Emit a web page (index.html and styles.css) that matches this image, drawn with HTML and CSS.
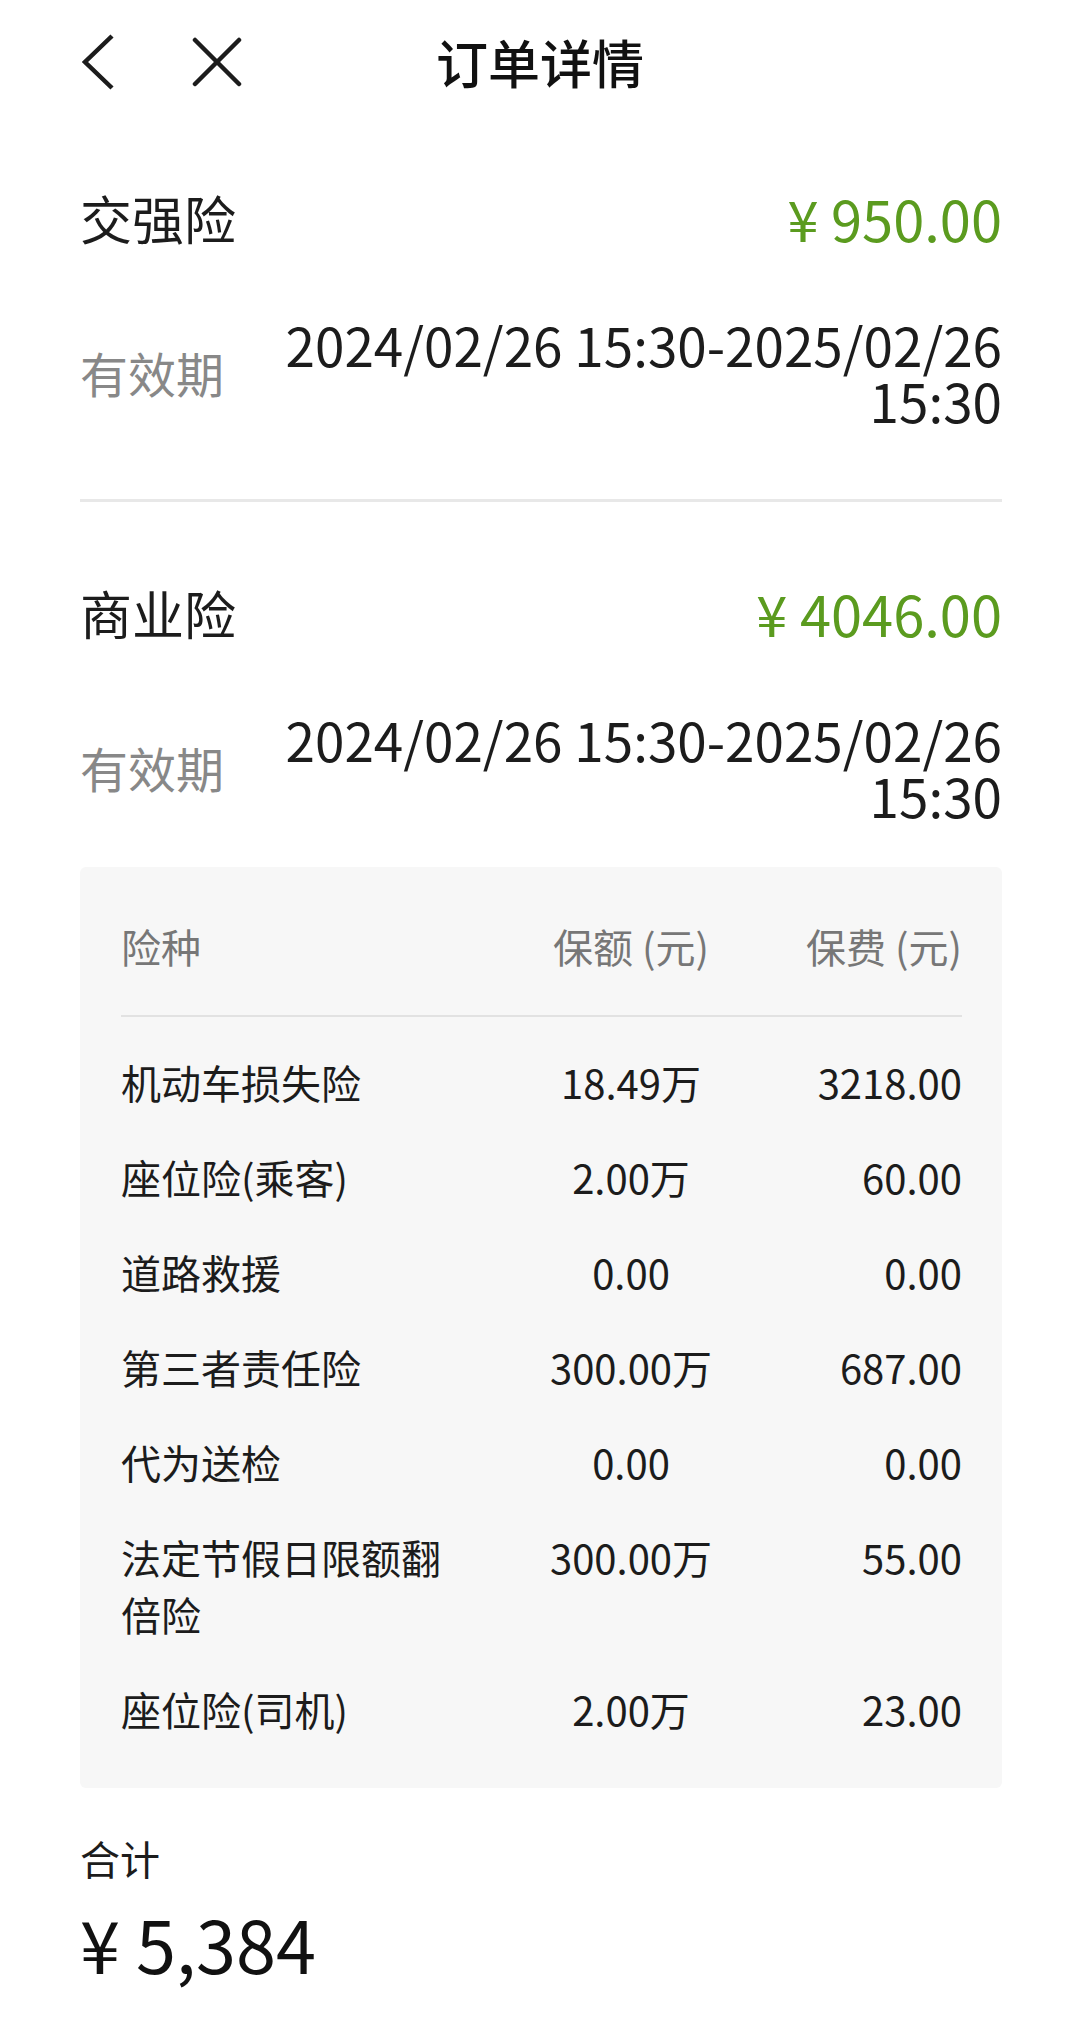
FILE: index.html
```html
<!DOCTYPE html>
<html lang="zh-CN">
<head>
    <meta charset="UTF-8">
    <meta name="viewport" content="width=device-width, initial-scale=1.0">
    <title>订单详情</title>
    <link rel="stylesheet" href="styles.css">
</head>
<body>
    <header class="nav">
        <div class="nav-left">
            <svg class="icon-back" width="32" height="56" viewBox="0 0 32 56">
                <polyline points="30,2 3,28 30,54" fill="none" stroke="#1c1c1c" stroke-width="4.5" stroke-linejoin="miter"/>
            </svg>
            <svg class="icon-close" width="50" height="50" viewBox="0 0 50 50">
                <line x1="3" y1="3" x2="47" y2="47" stroke="#1c1c1c" stroke-width="4.5" stroke-linecap="round"/>
                <line x1="47" y1="3" x2="3" y2="47" stroke="#1c1c1c" stroke-width="4.5" stroke-linecap="round"/>
            </svg>
        </div>
        <h1 class="nav-title">订单详情</h1>
        <div></div>
    </header>

    <main class="content">
        <section class="policy">
            <div class="policy-head">
                <span class="policy-name">交强险</span>
                <span class="policy-price">¥ 950.00</span>
            </div>
            <div class="period">
                <span class="period-label">有效期</span>
                <span class="period-value">2024/02/26 15:30-2025/02/26 15:30</span>
            </div>
        </section>

        <hr class="divider">

        <section class="policy policy-second">
            <div class="policy-head">
                <span class="policy-name">商业险</span>
                <span class="policy-price">¥ 4046.00</span>
            </div>
            <div class="period">
                <span class="period-label">有效期</span>
                <span class="period-value">2024/02/26 15:30-2025/02/26 15:30</span>
            </div>
        </section>

        <div class="cover-table">
            <div class="cover-row cover-header">
                <span>险种</span>
                <span class="col-amount">保额 (元)</span>
                <span class="col-fee">保费 (元)</span>
            </div>
            <div class="cover-line"></div>
            <div class="cover-row">
                <span>机动车损失险</span>
                <span class="col-amount num">18.49万</span>
                <span class="col-fee num">3218.00</span>
            </div>
            <div class="cover-row">
                <span>座位险(乘客)</span>
                <span class="col-amount num">2.00万</span>
                <span class="col-fee num">60.00</span>
            </div>
            <div class="cover-row">
                <span>道路救援</span>
                <span class="col-amount num">0.00</span>
                <span class="col-fee num">0.00</span>
            </div>
            <div class="cover-row">
                <span>第三者责任险</span>
                <span class="col-amount num">300.00万</span>
                <span class="col-fee num">687.00</span>
            </div>
            <div class="cover-row">
                <span>代为送检</span>
                <span class="col-amount num">0.00</span>
                <span class="col-fee num">0.00</span>
            </div>
            <div class="cover-row">
                <span>法定节假日限额翻倍险</span>
                <span class="col-amount num">300.00万</span>
                <span class="col-fee num">55.00</span>
            </div>
            <div class="cover-row">
                <span>座位险(司机)</span>
                <span class="col-amount num">2.00万</span>
                <span class="col-fee num">23.00</span>
            </div>
        </div>

        <div class="total">
            <div class="total-label">合计</div>
            <div class="total-value">¥ 5,384</div>
        </div>
    </main>
</body>
</html>
```

FILE: styles.css
```css
body {
    margin: 0;
    background-color: #fff;
    color: #1c1c1c;
    font-family: "Noto Sans CJK SC", "Noto Sans", sans-serif;
}
.nav {
    display: grid;
    grid-template-columns: 1fr auto 1fr;
    align-items: center;
    height: 124px;
    padding: 0 80px;
}
.nav-left {
    display: flex;
    align-items: center;
    gap: 78px;
    padding-left: 2px;
}
.icon-back {
    display: block;
}
.icon-close {
    display: block;
}
.nav-title {
    margin: 0;
    font-size: 52px;
    font-weight: 500;
    line-height: 72px;
    color: #111;
}
.content {
    padding: 0 78px 0 80px;
}
.policy {
    padding-top: 58px;
}
.policy-second {
    padding-top: 75px;
}
.policy-head {
    display: flex;
    justify-content: space-between;
    align-items: center;
    height: 72px;
}
.policy-name {
    font-size: 52px;
    line-height: 72px;
}
.policy-price {
    font-size: 56px;
    line-height: 72px;
    color: #5b9b1f;
}
.period {
    display: flex;
    align-items: center;
    margin-top: 62px;
}
.period-label {
    font-size: 48px;
    color: #888;
    white-space: nowrap;
}
.period-value {
    flex: 1;
    text-align: right;
    font-size: 53px;
    line-height: 56px;
}
.divider {
    margin: 71px 0 0;
    border: none;
    border-top: 3px solid #e8e8e8;
}
.cover-table {
    margin-top: 44px;
    padding: 32px 40px 31px 41px;
    background-color: #f7f7f7;
    border-radius: 6px;
}
.cover-row {
    display: grid;
    grid-template-columns: 340px 340px 1fr;
    align-items: start;
    padding: 19px 0;
    font-size: 40px;
    line-height: 57px;
}
.cover-header {
    color: #777;
}
.cover-line {
    height: 2px;
    margin: 21px 0 18px;
    background-color: #e2e2e2;
}
.col-amount {
    text-align: center;
}
.col-fee {
    text-align: right;
}
.num {
    font-size: 40px;
}
.total {
    margin-top: 42px;
}
.total-label {
    font-size: 40px;
    line-height: 56px;
}
.total-value {
    margin-top: 12px;
    font-size: 72px;
    line-height: 90px;
    color: #111;
}
```
